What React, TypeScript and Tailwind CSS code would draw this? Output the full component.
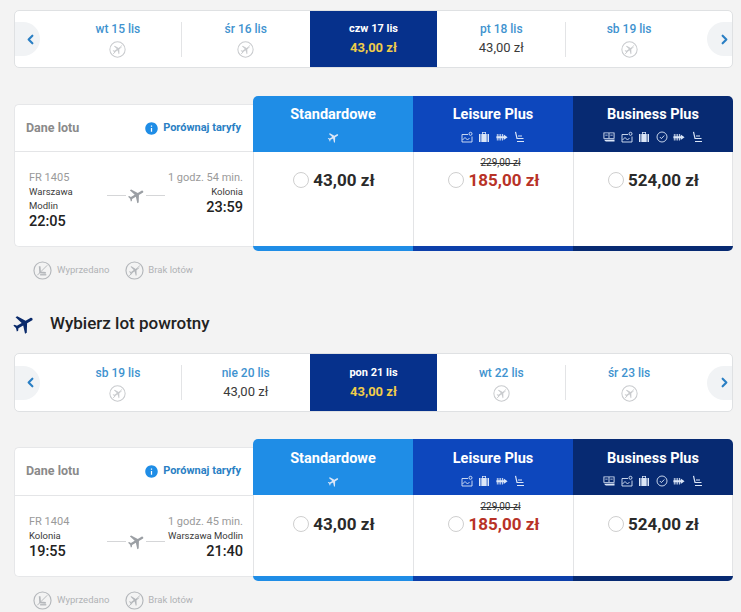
import { MdFlight, MdInfo } from 'react-icons/md';
import { ChevronLeft, ChevronRight } from 'lucide-react';

interface Day {
  label: string;
  price?: string;
  selected?: boolean;
  sepRight?: boolean;
  sepLeft?: boolean;
}

// Plane crossed out, used for days without flights
function NoFlightIcon({ size = 'small' }: { size?: 'small' | 'large' }) {
  const box = size === 'small' ? 'w-[17px] h-[17px] mt-[1px] text-[#c9cbce]' : 'w-[19px] h-[19px] text-[#b4b7bb]';
  return (
    <svg viewBox="0 0 20 20" className={box} fill="none" stroke="currentColor">
      <circle cx="10" cy="10" r="9" strokeWidth="1.2" />
      <path d="M15.5 5 4.5 15.5" strokeWidth="1" />
      <path
        d="M10 3.5 10.8 8 15.5 10.6 15.5 11.6 10.8 10.4 10.5 13.8 11.8 14.8 11.8 15.6 10 15 8.2 15.6 8.2 14.8 9.5 13.8 9.2 10.4 4.5 11.6 4.5 10.6 9.2 8Z"
        transform="rotate(60 10 10)"
        fill="currentColor"
        stroke="none"
      />
    </svg>
  );
}

// Reclined seat crossed out, "sold out" legend
function SoldOutIcon() {
  return (
    <svg viewBox="0 0 20 20" className="w-[19px] h-[19px] text-[#b4b7bb]" fill="none" stroke="currentColor">
      <circle cx="10" cy="10" r="9" strokeWidth="1.2" />
      <path d="M15 4.5 4.5 15" strokeWidth="1" />
      <path d="M7 5.5 7.5 12 13.5 12.5" strokeWidth="1.8" />
      <path d="M7.5 14.5H14" strokeWidth="1.4" />
    </svg>
  );
}

function NavButton({ side }: { side: 'left' | 'right' }) {
  return (
    <div className={`w-[39px] flex items-center shrink-0 ${side === 'left' ? 'justify-start' : 'justify-end'}`}>
      {side === 'left' ? (
        <div className="w-[25px] h-[34px] bg-[#f1f3f5] flex items-center justify-end pr-[2px] rounded-r-[17px]">
          <ChevronLeft size={15} strokeWidth={3.4} className="text-[#2a7fc4]" />
        </div>
      ) : (
        <div className="w-[25px] h-[34px] bg-[#f1f3f5] flex items-center justify-end rounded-l-[17px]">
          <ChevronRight size={15} strokeWidth={3.4} className="text-[#2a7fc4]" />
        </div>
      )}
    </div>
  );
}

// lower: the return section of the page sits about 1px looser than the outbound one
function DateStrip({ days, lower }: { days: Day[]; lower?: boolean }) {
  const cellTop = lower ? 'pt-[12px]' : 'pt-[11px]';
  return (
    <div className={`flex bg-white border border-[#dfe1e3] rounded-[5px] overflow-hidden ${lower ? 'h-[59px]' : 'h-[58px]'}`}>
      <NavButton side="left" />
      <div className="flex-1 grid grid-cols-5">
        {days.map(day =>
          day.selected ? (
            <div key={day.label} className={`bg-[#06318c] flex flex-col items-center gap-[4px] ${cellTop}`}>
              <span className="text-[11px] leading-[14px] font-bold text-white">{day.label}</span>
              <span className="text-[13px] leading-[16px] font-bold text-[#f0cd4a]">{day.price}</span>
            </div>
          ) : (
            <div key={day.label} className={`relative flex flex-col items-center gap-[4px] ${cellTop}`}>
              {day.sepRight && <div className="absolute right-0 top-[11px] h-[35px] w-px bg-[#e3e4e6]" />}
              {day.sepLeft && <div className="absolute left-0 top-[11px] h-[35px] w-px bg-[#e3e4e6]" />}
              <span className="text-[12px] leading-[14px] font-medium text-[#3f93cf]">{day.label}</span>
              {day.price ? (
                <span className="text-[13px] leading-[16px] text-[#3a3a3a]">{day.price}</span>
              ) : (
                <NoFlightIcon />
              )}
            </div>
          )
        )}
      </div>
      <NavButton side="right" />
    </div>
  );
}

function IconMap() {
  return (
    <svg viewBox="0 0 12 12" className="w-[12px] h-[12px]" fill="none" stroke="currentColor" strokeWidth="0.9">
      <path d="M1 3.5H7M1 3.5V11H11V5.5" />
      <path d="M1.5 9 4 6.5 6.5 9 8.5 7" />
      <circle cx="9.5" cy="2.8" r="1.5" />
    </svg>
  );
}

function IconBag() {
  return (
    <svg viewBox="0 0 12 12" className="w-[12px] h-[12px]" fill="currentColor">
      <path d="M4 1H8V3H7.2V1.8H4.8V3H4Z" />
      <path d="M1 3H2.5V11H1ZM3.3 3H8.7V11H3.3ZM9.5 3H11V11H9.5Z" />
    </svg>
  );
}

function IconFastTrack() {
  return (
    <svg viewBox="0 0 14 12" className="w-[12px] h-[12px]" fill="currentColor">
      <path d="M1 2.5H2V10H1ZM3 2.5H4V10H3ZM5 2.5H6V10H5ZM7 2.5H8V10H7Z" />
      <path d="M0.5 5H9V3L13.5 6.2 9 9.4V7.4H0.5Z" />
    </svg>
  );
}

function IconSeat() {
  return (
    <svg viewBox="0 0 12 12" className="w-[12px] h-[12px]" fill="none" stroke="currentColor" strokeWidth="1.2">
      <path d="M2.5 0.8 4 7.5H10.5" />
      <path d="M5 5H9M4 10.5H11" />
    </svg>
  );
}

function IconClock() {
  return (
    <svg viewBox="0 0 12 12" className="w-[12px] h-[12px]" fill="none" stroke="currentColor" strokeWidth="0.9">
      <circle cx="6" cy="6" r="5" />
      <path d="M3.8 6 5.4 7.6 8.3 4.5" />
    </svg>
  );
}

function IconTicket() {
  return (
    <svg viewBox="0 0 13 12" className="w-[12px] h-[12px]" fill="currentColor">
      <path d="M0.5 1H12.5V8H0.5ZM1.5 2V7H6V2ZM7 2V7H11.5V2Z" />
      <path d="M2.5 3.5H5V4.3H2.5ZM8 3.5H10.5V4.3H8ZM1 9 12.5 8.8V11L3 11Z" />
    </svg>
  );
}

function FareHeader({ title, bg, lower, children }: { title: string; bg: string; lower?: boolean; children: React.ReactNode }) {
  return (
    <div className={`h-[56px] flex flex-col items-center gap-[6px] text-[#dbe6f7] ${lower ? 'pt-[10px]' : 'pt-[9px]'} ${bg}`}>
      <span className="text-[14.5px] leading-[20px] font-bold text-white">{title}</span>
      <div className="flex items-center gap-[5.6px] h-[12px]">{children}</div>
    </div>
  );
}

function Price({ value, old, lower }: { value: string; old?: string; lower?: boolean }) {
  return (
    <div className={`relative flex items-center justify-center gap-[4px] pl-[1px] ${lower ? 'pt-[19px]' : 'pt-[18px]'}`}>
      {old && (
        <span className={`absolute left-0 right-0 ml-[14px] text-center text-[10px] leading-[12px] text-[#333] line-through ${lower ? 'top-[6px]' : 'top-[5px]'}`}>
          {old}
        </span>
      )}
      <span className="w-[16px] h-[16px] rounded-full border border-[#cfcfcf] bg-white" />
      <span className={`text-[17px] leading-[20px] font-bold ${old ? 'text-[#b83227]' : 'text-[#2a2a2a]'}`}>{value}</span>
    </div>
  );
}

function FareTable({ lower, children }: { lower?: boolean; children: React.ReactNode }) {
  return (
    <div className="flex">
      <div className="w-[240px] shrink-0 mt-[8px] mb-[4px] bg-white rounded-l-[5px] border border-r-0 border-[#e6e7e9] flex flex-col">
        <div className={`border-b border-[#e4e5e7] flex items-center justify-between pl-[11px] pr-[13px] ${lower ? 'h-[48px]' : 'h-[47px]'}`}>
          <span className="text-[12.5px] font-bold text-[#8a8a8a]">Dane lotu</span>
          <span className="flex items-center gap-[4px] text-[11px] font-bold text-[#2a7fc4]">
            <MdInfo size={15} className="text-[#1f8de6]" />
            Porównaj taryfy
          </span>
        </div>
        {children}
      </div>
      <div className="flex-1 grid grid-cols-3 rounded-[5px] overflow-hidden -ml-px">
        <div className="flex flex-col bg-white">
          <FareHeader title="Standardowe" bg="bg-[#1f8de6]" lower={lower}>
            <MdFlight size={13} className="rotate-[60deg]" />
          </FareHeader>
          <div className="flex-1 border-l border-[#e3e4e6]">
            <Price value="43,00 zł" lower={lower} />
          </div>
          <div className="h-[5px] bg-[#1f8de6]" />
        </div>
        <div className="flex flex-col bg-white">
          <FareHeader title="Leisure Plus" bg="bg-[#0d47bd]" lower={lower}>
            <IconMap />
            <IconBag />
            <IconFastTrack />
            <IconSeat />
          </FareHeader>
          <div className="flex-1 border-l border-[#e3e4e6]">
            <Price value="185,00 zł" old="229,00 zł" lower={lower} />
          </div>
          <div className="h-[5px] bg-[#0d3faa]" />
        </div>
        <div className="flex flex-col bg-white">
          <FareHeader title="Business Plus" bg="bg-[#072a72]" lower={lower}>
            <IconTicket />
            <IconMap />
            <IconBag />
            <IconClock />
            <IconFastTrack />
            <IconSeat />
          </FareHeader>
          <div className="flex-1 border-x border-[#e3e4e6]">
            <Price value="524,00 zł" lower={lower} />
          </div>
          <div className="h-[5px] bg-[#072a72]" />
        </div>
      </div>
    </div>
  );
}

function FlightInfo(props: {
  code: string;
  duration: string;
  from: string[];
  to: string;
  dep: string;
  arr: string;
  planeRow: string;
}) {
  return (
    <div className="grid grid-cols-[78px_58px_78px] pl-[14px] pr-[11px] pt-[19px] pb-[15px]">
      <div className="flex flex-col">
        <span className="text-[11px] leading-[14px] text-[#9a9a9a]">{props.code}</span>
        {props.from.map(line => (
          <span key={line} className="text-[9.5px] leading-[14px] text-[#3a3a3a]">
            {line}
          </span>
        ))}
        <span className="text-[14.5px] leading-[18px] font-medium text-[#222]">{props.dep}</span>
      </div>
      <div className={`flex items-center justify-between ${props.planeRow}`}>
        <span className="w-[19px] h-px bg-[#d5d6d8]" />
        <MdFlight size={19} className="rotate-[60deg] text-[#9b9fa4]" />
        <span className="w-[19px] h-px bg-[#d5d6d8]" />
      </div>
      <div className="flex flex-col items-end">
        <span className="text-[11px] leading-[14px] text-[#9a9a9a] whitespace-nowrap">{props.duration}</span>
        <span className="text-[9.5px] leading-[14px] text-[#3a3a3a] whitespace-nowrap">{props.to}</span>
        <span className="text-[14.5px] leading-[18px] font-medium text-[#222]">{props.arr}</span>
      </div>
    </div>
  );
}

function Legend() {
  return (
    <div className="h-[20px] mt-[9px] pl-[19px] flex items-center gap-[16px] text-[9.5px] text-[#b0b2b5]">
      <span className="flex items-center gap-[5px]">
        <SoldOutIcon />
        Wyprzedano
      </span>
      <span className="flex items-center gap-[4px]">
        <NoFlightIcon size="large" />
        Brak lotów
      </span>
    </div>
  );
}

export default function App() {
  return (
    <div
      className="w-[741px] h-[612px] overflow-hidden bg-[#f3f3f3] pt-[10px] pl-[14px] pr-[8px]"
      style={{ fontFamily: 'Roboto, sans-serif' }}
    >
      <DateStrip
        days={[
          { label: 'wt 15 lis', sepRight: true },
          { label: 'śr 16 lis' },
          { label: 'czw 17 lis', price: '43,00 zł', selected: true },
          { label: 'pt 18 lis', price: '43,00 zł' },
          { label: 'sb 19 lis', sepLeft: true },
        ]}
      />
      <div className="mt-[28px]">
        <FareTable>
          <FlightInfo
            code="FR 1405"
            duration="1 godz. 54 min."
            from={['Warszawa', 'Modlin']}
            to="Kolonia"
            dep="22:05"
            arr="23:59"
            planeRow="h-[48px]"
          />
        </FareTable>
      </div>
      <Legend />

      <div className="mt-[34px] h-[20px] flex items-center gap-[14px]">
        <MdFlight size={24} className="rotate-[60deg] text-[#0a2a6b] -ml-[2px]" />
        <span className="text-[17px] font-medium text-[#222]">Wybierz lot powrotny</span>
      </div>

      <div className="mt-[19px]">
        <DateStrip
          lower
          days={[
            { label: 'sb 19 lis', sepRight: true },
            { label: 'nie 20 lis', price: '43,00 zł' },
            { label: 'pon 21 lis', price: '43,00 zł', selected: true },
            { label: 'wt 22 lis' },
            { label: 'śr 23 lis', sepLeft: true },
          ]}
        />
      </div>
      <div className="mt-[27px]">
        <FareTable lower>
          <FlightInfo
            code="FR 1404"
            duration="1 godz. 45 min."
            from={['Kolonia']}
            to="Warszawa Modlin"
            dep="19:55"
            arr="21:40"
            planeRow="h-[46px] pt-[6px]"
          />
        </FareTable>
      </div>
      <Legend />
    </div>
  );
}
